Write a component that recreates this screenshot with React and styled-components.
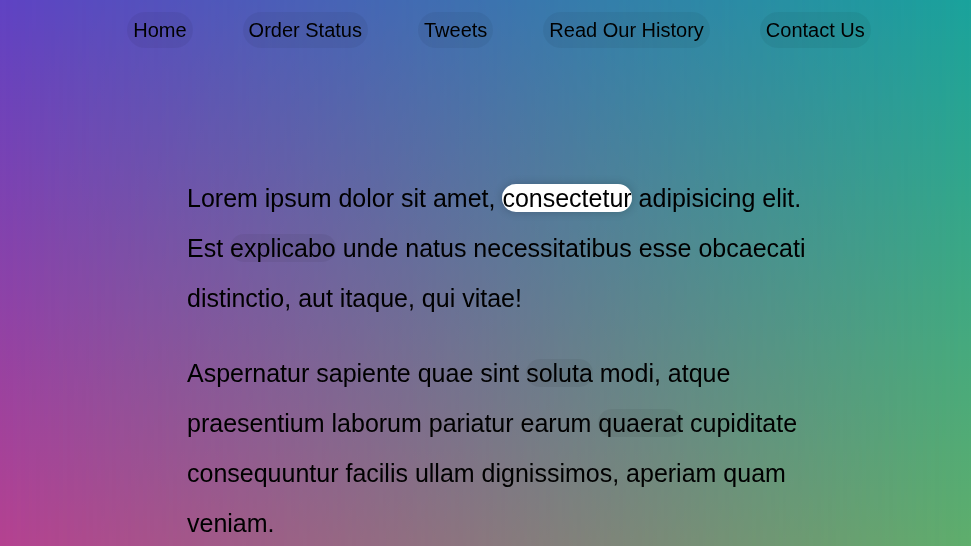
import React from 'react';
import styled, { createGlobalStyle } from 'styled-components';

const GlobalStyle = createGlobalStyle`
  *, *:before, *:after {
    box-sizing: border-box;
  }
  body {
    margin: 0;
    font-family: "Liberation Sans", Arial, sans-serif;
    color: black;
  }
`;

// four-corner blend: right edge on the box, left edge faded in from the left
const Backdrop = styled.div`
  position: fixed;
  inset: 0;
  z-index: -1;
  background: linear-gradient(to bottom, #1aa39c, #5fae6c);

  &::after {
    content: '';
    position: absolute;
    inset: 0;
    background: linear-gradient(to bottom, #5f42c3, #b54190);
    -webkit-mask-image: linear-gradient(to right, #000, transparent);
    mask-image: linear-gradient(to right, #000, transparent);
  }
`;

const Menu = styled.ul`
  display: flex;
  justify-content: center;
  gap: 50px;
  list-style: none;
  margin: 12px 0 125px;
  padding: 0 0 0 27px;
`;

const MenuLink = styled.a`
  display: inline-block;
  padding: 6px;
  font-size: 20px;
  line-height: 24px;
  color: black;
  text-decoration: none;
  background: rgba(0, 0, 0, 0.05);
  border-radius: 20px;
`;

const Wrapper = styled.div`
  max-width: 650px;
  margin-left: 187px;
`;

const Paragraph = styled.p`
  margin: 25px 0;
  font-size: 25px;
  line-height: 50px;
`;

const Link = styled.a`
  color: black;
  text-decoration: none;
  border-radius: 20px;
  background: ${p => (p.$active ? 'white' : 'rgba(0, 0, 0, 0.05)')};
  box-shadow: ${p => (p.$active ? '0 0 10px rgba(0, 0, 0, 0.2)' : 'none')};
`;

const menuItems = ['Home', 'Order Status', 'Tweets', 'Read Our History', 'Contact Us'];

export default function App() {
  return (
    <>
      <GlobalStyle />
      <Backdrop />
      <nav>
        <Menu>
          {menuItems.map(item => (
            <li key={item}>
              <MenuLink href="#">{item}</MenuLink>
            </li>
          ))}
        </Menu>
      </nav>
      <Wrapper>
        <Paragraph>
          Lorem ipsum dolor sit amet, <Link href="#" $active>consectetur</Link> adipisicing elit. Est{' '}
          <Link href="#">explicabo</Link> unde natus necessitatibus esse obcaecati distinctio, aut itaque, qui vitae!
        </Paragraph>
        <Paragraph>
          Aspernatur sapiente quae sint <Link href="#">soluta</Link> modi, atque praesentium laborum pariatur earum{' '}
          <Link href="#">quaerat</Link> cupiditate consequuntur facilis ullam dignissimos, aperiam quam veniam.
        </Paragraph>
      </Wrapper>
    </>
  );
}
